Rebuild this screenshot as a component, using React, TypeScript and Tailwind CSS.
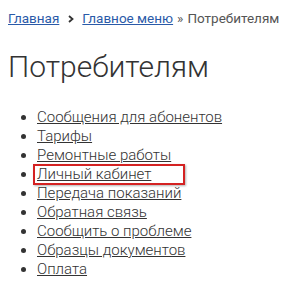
import React from 'react';

const ITEMS = [
  'Сообщения для абонентов',
  'Тарифы',
  'Ремонтные работы',
  'Личный кабинет',
  'Передача показаний',
  'Обратная связь',
  'Сообщить о проблеме',
  'Образцы документов',
  'Оплата',
];

const App: React.FC = () => {
  return (
    <div className="w-[294px] h-[297px] bg-white px-2 pt-[10px] font-['Roboto',sans-serif] text-[#333]">
      <div className="flex items-center text-[13.5px] leading-[17px] text-[#555]">
        <a href="#" className="text-[#2a5aa8] underline">Главная</a>
        <svg className="ml-[9px] mr-[8px] w-[6px] h-[8px]" viewBox="0 0 6 8" fill="none">
          <path d="M1 1 L4.5 4 L1 7" stroke="#333" strokeWidth="1.8" />
        </svg>
        <a href="#" className="text-[#2a5aa8] underline">Главное меню</a>
        <span className="mx-[4px]">»</span>
        <span>Потребителям</span>
      </div>

      <h1 className="mt-[22px] text-[30px] leading-[36px] font-light text-[#333]">Потребителям</h1>

      <ul className="mt-[23px] pl-[29px] list-disc text-[15px] leading-[19px] font-light">
        {ITEMS.map((item) => (
          <li key={item} className="pl-0">
            {item === 'Личный кабинет' ? (
              <span className="relative inline-block">
                <a href="#" className="underline text-[#333]">{item}</a>
                <span className="absolute left-[-4px] top-[-1px] w-[152px] h-[21px] border-2 border-[#d42222] shadow-[1px_1px_2px_rgba(0,0,0,0.3)]"></span>
              </span>
            ) : (
              <a href="#" className="underline text-[#333]">{item}</a>
            )}
          </li>
        ))}
      </ul>
    </div>
  );
};

export default App;
